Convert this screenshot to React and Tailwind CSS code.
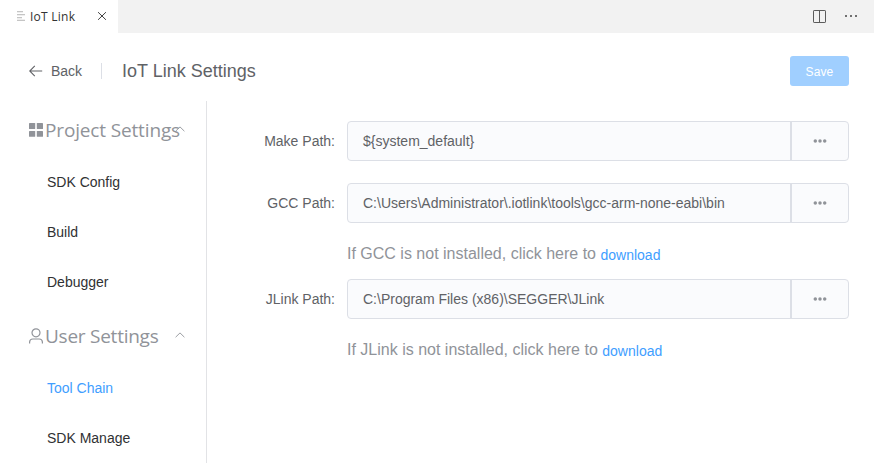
const sans = "font-['Liberation_Sans',Arial,sans-serif]";
const humanist = "font-['Open_Sans','Noto_Sans',sans-serif]";

function Chevron() {
  return (
    <svg width="10" height="6" viewBox="0 0 10 6" fill="none" stroke="#909399" strokeWidth="0.9" className="block shrink-0">
      <path d="M0.6 5.2 5 0.9 9.4 5.2" />
    </svg>
  );
}

function GridIcon() {
  return (
    <svg width="14" height="14" viewBox="0 0 14 14" fill="#909399" className="mt-[2px] block shrink-0">
      <rect x="0" y="0" width="6.2" height="6" rx="0.6" />
      <rect x="7.8" y="0" width="6.2" height="6" rx="0.6" />
      <rect x="0" y="8" width="6.2" height="5.8" rx="0.6" />
      <rect x="7.8" y="8" width="6.2" height="5.8" rx="0.6" />
    </svg>
  );
}

function UserIcon() {
  return (
    <svg width="14" height="16" viewBox="0 0 14 16" fill="none" stroke="#909399" strokeWidth="1.2" className="mt-[2px] block shrink-0">
      <circle cx="7" cy="4.8" r="4" />
      <path d="M0.6 15.6v-1.6a3.2 3.2 0 0 1 3.2-3h6.4a3.2 3.2 0 0 1 3.2 3v1.6" />
    </svg>
  );
}

function Section({ icon, title, tracking, children }) {
  return (
    <div>
      <div className="flex h-14 items-center pl-[29px] pr-[21px]">
        {icon}
        <span className={`mt-[2px] w-[120px] shrink-0 whitespace-nowrap text-[19px] leading-7 text-[#909399] ml-[2px] ${tracking} ${humanist}`}>{title}</span>
        <span className="-mt-px ml-auto"><Chevron /></span>
      </div>
      {children}
    </div>
  );
}

function Item({ label, active }) {
  return (
    <div className={`flex h-[50px] items-center pl-[47px] text-sm ${active ? "text-[#409eff]" : "text-[#303133]"}`}>{label}</div>
  );
}

function PathRow({ label, value }) {
  return (
    <div className="flex h-10">
      <div className="w-[140px] pr-3 text-right text-sm leading-10 text-[#606266]">{label}</div>
      <div className="flex w-[502px] overflow-hidden rounded border border-[#dcdfe6] bg-[#fafbfd]">
        <div className="w-[442px] whitespace-nowrap pl-[15px] text-sm leading-[38px] text-[#606266]">{value}</div>
        <div className="flex flex-1 items-center justify-center border-l-2 border-[#dcdfe6] pr-px">
          <svg width="14" height="4" viewBox="0 0 14 4" fill="#909399">
            <circle cx="2.3" cy="2" r="1.75" />
            <circle cx="7" cy="2" r="1.75" />
            <circle cx="11.7" cy="2" r="1.75" />
          </svg>
        </div>
      </div>
    </div>
  );
}

function Hint({ name }) {
  return (
    <div className="flex h-14 items-center whitespace-nowrap pl-[140px] pt-[6px] text-[#909399]">
      <span className="text-base">If {name} is not installed, click here to</span>
      <span className="ml-[4.5px] mt-[2px] text-sm text-[#409eff]">download</span>
    </div>
  );
}

export default function App() {
  return (
    <div className={`h-[471px] w-[874px] overflow-hidden bg-white ${sans}`}>
      <div className="flex h-[33px] bg-[#f2f2f2]">
        <div className="flex w-[118px] items-center bg-white pl-4">
          <svg width="10" height="10" viewBox="0 0 10 10" fill="#c5c5c5" className="-mt-px">
            <rect x="1" y="0" width="6" height="1.3" />
            <rect x="1" y="3" width="8" height="1.3" />
            <rect x="1" y="6" width="5" height="1.3" />
            <rect x="1" y="8.7" width="8" height="1.3" />
          </svg>
          <span className={`ml-1 w-[67px] whitespace-nowrap text-xs tracking-[0.25px] text-[#333333] ${humanist}`}>IoT Link</span>
          <svg width="10" height="10" viewBox="0 0 11 10" fill="none" stroke="#424242" strokeWidth="1.1" className="-mt-px">
            <path d="M1.2 0.8 9.8 9.2M9.8 0.8 1.2 9.2" />
          </svg>
        </div>
        <div className="ml-auto flex items-center pr-[16px]">
          <svg width="13" height="13" viewBox="0 0 13 13" fill="none" stroke="#5c5c5c" className="-mt-px">
            <rect x="0.5" y="0.5" width="12" height="12" rx="0.6" />
            <path d="M6.5 0.5v12" />
          </svg>
          <svg width="13" height="2" viewBox="0 0 13 2" fill="#707070" className="ml-[19px] -mt-px">
            <rect x="0" y="0" width="2" height="2" />
            <rect x="5" y="0" width="2" height="2" />
            <rect x="10" y="0" width="2" height="2" />
          </svg>
        </div>
      </div>

      <div className="flex h-[68px] items-center pl-[29px] pr-[25px] pt-2 text-[#606266]">
        <svg width="14" height="12" viewBox="0 0 14 12" fill="none" stroke="#606266" strokeWidth="1.1">
          <path d="M13.2 6H0.8M5.8 0.8 0.7 6l5.1 5.2" />
        </svg>
        <span className="ml-[8px] w-[50px] text-sm">Back</span>
        <span className="h-4 w-px bg-[#dcdfe6]" />
        <span className="ml-[20px] text-lg leading-6">IoT Link Settings</span>
        <button className="ml-auto h-[30px] w-[59px] rounded-[3px] bg-[#a0cfff] pt-px text-xs font-medium tracking-[0.1px] text-white">Save</button>
      </div>

      <div className="flex h-[362px]">
        <div className="w-[207px] border-r border-[#e2e3e6]">
          <Section icon={<GridIcon />} title="Project Settings" tracking="tracking-[-0.15px]">
            <Item label="SDK Config" />
            <Item label="Build" />
            <Item label="Debugger" />
          </Section>
          <Section icon={<UserIcon />} title="User Settings" tracking="tracking-[-0.25px]">
            <Item label="Tool Chain" active />
            <Item label="SDK Manage" />
          </Section>
        </div>
        <div className="pt-5">
          <PathRow label="Make Path:" value="${system_default}" />
          <div className="h-[22px]" />
          <PathRow label="GCC Path:" value="C:\Users\Administrator\.iotlink\tools\gcc-arm-none-eabi\bin" />
          <Hint name="GCC" />
          <PathRow label="JLink Path:" value="C:\Program Files (x86)\SEGGER\JLink" />
          <Hint name="JLink" />
        </div>
      </div>
    </div>
  );
}
